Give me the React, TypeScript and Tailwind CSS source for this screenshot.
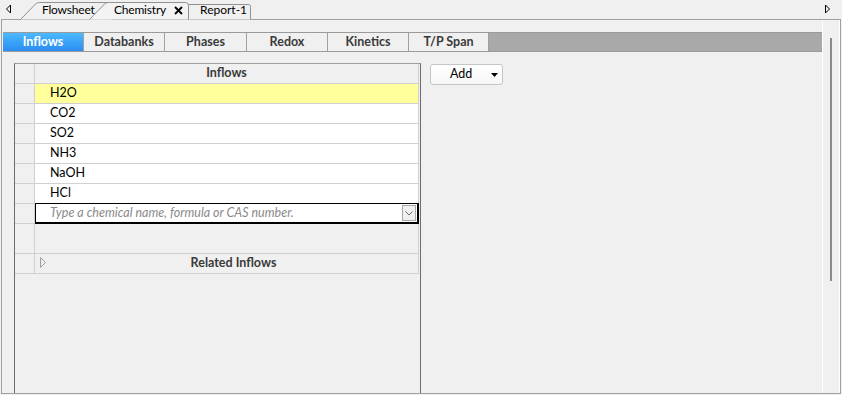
import React from "react";

const FONT = { fontFamily: 'Lato, "Noto Sans", Arial, sans-serif' };

function TopTabs() {
  return (
    <div className="relative h-[19px]">
      <svg className="absolute left-0 top-0" width="842" height="20" viewBox="0 0 842 20">
        <path d="M10.5 5 L6.5 9 L10.5 13 Z" fill="none" stroke="#000" strokeWidth="1" />
        <path d="M825.5 5 L829.5 9 L825.5 13 Z" fill="none" stroke="#000" strokeWidth="1" />
        <path d="M188.5 19.5 L188.5 4.5 L248.5 4.5 Q250.5 4.5 250.5 6.5 L250.5 19.5" fill="#f0f0f0" stroke="#919191" />
        <path d="M20.5 19.5 L35.5 4 Q37 2.5 39.5 2.5 L112 2.5 L112 19.5" fill="#f0f0f0" stroke="#919191" />
        <path d="M89.5 19.5 L104.5 4 Q106 2.5 108.5 2.5 L185.5 2.5 Q188.5 2.5 188.5 5.5 L188.5 19.5" fill="#f3f3f3" stroke="#919191" />
      </svg>
      <div className="relative flex h-[19px] items-center pt-px text-[12px] text-black">
        <div className="w-[42px]" />
        <div className="w-[72px] whitespace-nowrap tracking-[-0.2px]">Flowsheet</div>
        <div className="w-[60px] whitespace-nowrap tracking-[-0.2px]">Chemistry</div>
        <div className="flex w-[14px] items-center">
          <svg width="9" height="9" viewBox="0 0 9 9">
            <path d="M1 1 L8 8 M8 1 L1 8" stroke="#000" strokeWidth="1.8" />
          </svg>
        </div>
        <div className="whitespace-nowrap pl-[12px]">Report-1</div>
      </div>
    </div>
  );
}

const SUBTABS: { label: string; w: string }[] = [
  { label: "Databanks", w: "w-[81px]" },
  { label: "Phases", w: "w-[82px]" },
  { label: "Redox", w: "w-[81px]" },
  { label: "Kinetics", w: "w-[81px]" },
  { label: "T/P Span", w: "w-[80px]" },
];

function SubTabs() {
  return (
    <div className="flex h-[20px] border-y border-[#9a9a9a] bg-[#a9a9a9] text-[12.5px] font-bold">
      <div className="flex w-[81px] items-center justify-center border-r border-[#a0a0a0] bg-gradient-to-b from-[#4cb9ff] to-[#2b8df0] text-white">
        Inflows
      </div>
      {SUBTABS.map((t) => (
        <div
          key={t.label}
          className={`${t.w} flex items-center justify-center border-r border-[#a0a0a0] bg-[#f0f0f0] text-[#3a3a3a]`}
        >
          {t.label}
        </div>
      ))}
    </div>
  );
}

const ROWS = ["H2O", "CO2", "SO2", "NH3", "NaOH", "HCl"];

function Grid() {
  return (
    <div className="flex w-[407px] flex-col border-x border-t border-l-[#6d6d6d] border-r-[#6d6d6d] border-t-[#a0a0a0]">
      <div className="w-[404px]">
        <div className="flex h-[20px]">
          <div className="w-[20px] border-b border-r border-[#d0d0d0] bg-[#f0f0f0]" />
          <div className="flex w-[384px] items-center justify-center border-b border-r border-[#d0d0d0] bg-[#f0f0f0] text-[12.5px] font-bold text-[#3a3a3a]">
            Inflows
          </div>
        </div>
        {ROWS.map((r, i) => (
          <div key={r} className="flex h-[20px]">
            <div className="w-[20px] border-b border-r border-[#d0d0d0] bg-[#f0f0f0]" />
            <div
              className={`flex w-[384px] items-center border-b border-r border-[#d0d0d0] pl-[15px] text-[12.5px] text-black ${
                i === 0 ? "bg-[#ffff9c]" : "bg-white"
              }`}
            >
              {r}
            </div>
          </div>
        ))}
        <div className="flex h-[20px]">
          <div className="w-[20px] border-b border-r border-[#d0d0d0] bg-[#f0f0f0]" />
          <div className="-mt-px flex h-[21px] w-[384px] items-center border-y border-l border-r-2 border-b-2 border-black bg-white pl-[14px] pr-px">
            <span className="flex-1 whitespace-nowrap text-[12.5px] italic text-[#8a8a8a]">
              Type a chemical name, formula or CAS number.
            </span>
            <div className="flex h-[16px] w-[14px] items-center justify-center border border-[#a8a8a8] bg-[#f0f0f0]">
              <svg width="8" height="5" viewBox="0 0 8 5">
                <path d="M0.5 0.5 L4 4 L7.5 0.5" fill="none" stroke="#6a6a6a" strokeWidth="1" />
              </svg>
            </div>
          </div>
        </div>
        <div className="flex h-[30px]">
          <div className="w-[20px] border-b border-r border-[#d0d0d0] bg-[#f0f0f0]" />
          <div className="w-[384px] border-b border-r border-[#d0d0d0] bg-[#f0f0f0]" />
        </div>
        <div className="flex h-[20px]">
          <div className="w-[20px] border-b border-r border-[#d0d0d0] bg-[#f0f0f0]" />
          <div className="relative flex w-[384px] items-center justify-center border-b border-r border-[#d0d0d0] bg-[#f0f0f0] pl-[14px] text-[12.5px] font-bold text-[#3a3a3a]">
            <svg className="absolute left-[5px] top-[3px]" width="7" height="11" viewBox="0 0 7 11">
              <path d="M0.5 0.5 L0.5 10.5 M0.5 0.5 L5.5 5.5 L0.5 10.5" fill="none" stroke="#a0a0a0" strokeWidth="1" />
            </svg>
            Related Inflows
          </div>
        </div>
      </div>
      <div className="flex-1" />
    </div>
  );
}

export default function App() {
  return (
    <div className="h-[395px] w-[842px] overflow-hidden bg-[#f0f0f0] text-[12px]" style={FONT}>
      <TopTabs />
      <div className="ml-px flex h-[375px] w-[840px] border border-[#a0a0a0]">
        <div className="flex flex-1 flex-col pl-px pt-[12px]">
          <SubTabs />
          <div className="ml-[11px] mt-[11px] flex flex-1">
            <Grid />
            <div className="ml-[9px] mt-px">
              <div className="flex h-[21px] w-[73px] items-center justify-between rounded-[3px] border border-[#c5c5c5] bg-gradient-to-b from-white to-[#f7f7f7] pl-[19px] pr-[4px] text-[12.5px] text-black">
                <span>Add</span>
                <svg width="7" height="4" viewBox="0 0 7 4">
                  <path d="M0 0 L7 0 L3.5 4 Z" fill="#000" />
                </svg>
              </div>
            </div>
          </div>
        </div>
        <div className="flex w-[18px] justify-center border-x border-white pt-[18px]">
          <div className="h-[243px] w-[2px] bg-[#8a8a8a]" />
        </div>
      </div>
    </div>
  );
}
